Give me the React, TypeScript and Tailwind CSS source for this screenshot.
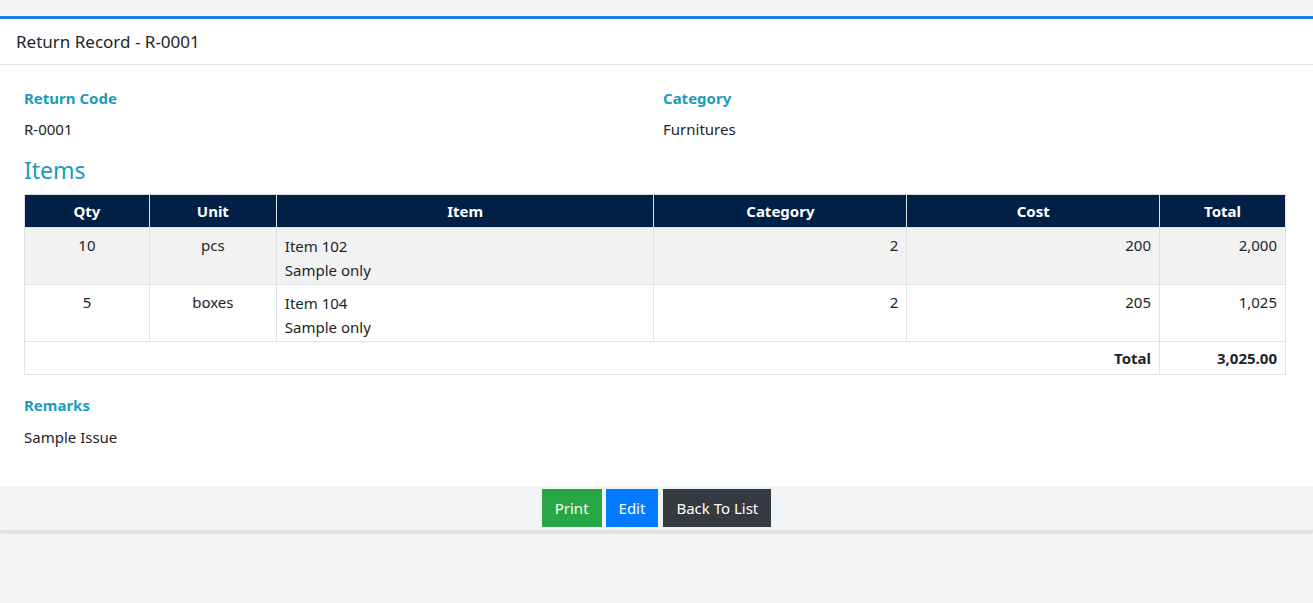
export default function App() {
  const f = { fontFamily: '"Noto Sans", "Open Sans", sans-serif' };
  const th = "border border-[#dee2e6] text-white font-bold text-[15px] h-[33px] text-center";
  const td = "border border-[#dee2e6] align-top px-2 pt-[6px] text-[15px] text-[#212529]";
  const rows = [
    { q: "10", u: "pcs", i: "Item 102", c: "2", cost: "200", t: "2,000", bg: "bg-[#f2f2f2]" },
    { q: "5", u: "boxes", i: "Item 104", c: "2", cost: "205", t: "1,025", bg: "bg-white" },
  ];
  return (
    <div style={f} className="w-[1313px] h-[603px] bg-[#f4f5f7] pt-4 overflow-hidden">
      <div className="bg-white border-t-[3px] border-[#1a7fe8] shadow-sm">
        <div className="h-[46px] flex items-center px-4 border-b border-[#dee2e6] text-[17px] text-[#212529]">Return Record - R-0001</div>
        <div className="pl-6 pr-[27px] pt-[22px] pb-[38px]">
          <div className="grid grid-cols-[639px_1fr]">
            <div>
              <div className="text-[15px] font-bold text-[#1c9bbd]">Return Code</div>
              <div className="text-[15px] text-[#212529] mt-[8px]">R-0001</div>
            </div>
            <div>
              <div className="text-[15px] font-bold text-[#1c9bbd]">Category</div>
              <div className="text-[15px] text-[#212529] mt-[8px]">Furnitures</div>
            </div>
          </div>
          <div className="text-[23px] text-[#1c9bbd] mt-[14px] leading-[32px] mb-[8px]">Items</div>
          <table className="w-full border-collapse">
            <colgroup>
              <col className="w-[125px]" /><col className="w-[127px]" /><col className="w-[378px]" />
              <col className="w-[253px]" /><col className="w-[253px]" /><col className="w-[126px]" />
            </colgroup>
            <thead>
              <tr className="bg-[#002046]">
                {["Qty", "Unit", "Item", "Category", "Cost", "Total"].map((h) => (
                  <th key={h} className={th}>{h}</th>
                ))}
              </tr>
            </thead>
            <tbody>
              {rows.map((r) => (
                <tr key={r.i} className={`${r.bg} h-[57px]`}>
                  <td className={`${td} text-center`}>{r.q}</td>
                  <td className={`${td} text-center`}>{r.u}</td>
                  <td className={`${td} leading-[24px] pt-[4px]`}>{r.i}<br />Sample only</td>
                  <td className={`${td} text-right`}>{r.c}</td>
                  <td className={`${td} text-right`}>{r.cost}</td>
                  <td className={`${td} text-right`}>{r.t}</td>
                </tr>
              ))}
              <tr className="h-[33px]">
                <td colSpan={5} className="border border-[#dee2e6] text-right px-2 text-[15px] font-bold text-[#212529]">Total</td>
                <td className="border border-[#dee2e6] text-right px-2 text-[15px] font-bold text-[#212529]">3,025.00</td>
              </tr>
            </tbody>
          </table>
          <div className="text-[15px] font-bold text-[#1c9bbd] mt-[19px]">Remarks</div>
          <div className="text-[15px] text-[#212529] mt-[9px]">Sample Issue</div>
        </div>
        <div className="h-[46px] bg-[#f3f4f5] border-b-2 border-[#e2e3e5] flex items-center justify-center gap-1">
          <button className="h-[38px] px-[13px] bg-[#28a745] text-white text-[15px]">Print</button>
          <button className="h-[38px] px-[13px] bg-[#007bff] text-white text-[15px]">Edit</button>
          <button className="h-[38px] px-[13px] ml-[1px] bg-[#343a40] text-white text-[15px]">Back To List</button>
        </div>
      </div>
    </div>
  );
}
